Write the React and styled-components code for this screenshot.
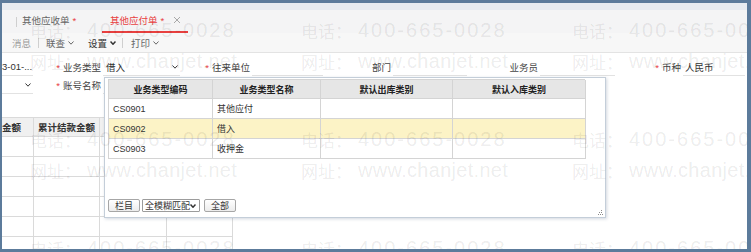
import React from 'react';
import styled, { createGlobalStyle } from 'styled-components';

const GlobalStyle = createGlobalStyle`
  html, body {
    margin: 0;
    padding: 0;
    background: #fff;
  }
  body {
    font-family: "Liberation Sans", "Noto Sans CJK SC", sans-serif;
    font-size: 9.5px;
    color: #333;
  }
  * {
    box-sizing: border-box;
  }
`;

const Frame = styled.div`
  width: 751px;
  height: 252px;
  border-style: solid;
  border-color: #5c7b9b;
  border-width: 3px 4px 3px 2px;
  position: relative;
  overflow: hidden;
  background: #fff;
`;

const TopStrip = styled.div`
  height: 7px;
  background: #e7ebf0;
`;

const TabBar = styled.div`
  height: 23px;
  background: #f4f4f5;
  display: flex;
  align-items: stretch;
  padding-left: 14px;
`;

const Sep = styled.span`
  align-self: center;
  width: 1px;
  height: 10px;
  background: #cfcfcf;
  margin-left: ${p => p.$ml || 0}px;
`;

const Tab = styled.div`
  width: ${p => p.$w}px;
  margin-left: ${p => p.$ml || 0}px;
  display: flex;
  align-items: center;
  gap: 3px;
  padding-left: ${p => p.$pl || 0}px;
  padding-bottom: 1px;
  color: ${p => (p.$active ? '#e8403f' : '#666')};
  border-bottom: 2px solid ${p => (p.$active ? '#e8403f' : 'transparent')};
  white-space: nowrap;

  .star {
    color: #e8403f;
  }
`;

const Close = styled.span`
  margin-left: 6px;
  display: inline-flex;
  color: #a8a8a8;
`;

const Toolbar = styled.div`
  height: 20px;
  background: #f7f7f7;
  border-bottom: 1px solid #e3e3e3;
  display: flex;
  align-items: center;
  padding-left: 10px;
`;

const ToolItem = styled.span`
  display: inline-flex;
  align-items: center;
  gap: 3px;
  margin-left: ${p => p.$ml || 0}px;
  color: ${p => (p.$muted ? '#9a9a9a' : p.$strong ? '#333' : '#666')};
  white-space: nowrap;
`;

const Form = styled.div`
  padding-top: 5px;
  display: flex;
  flex-direction: column;
`;

const FormRow = styled.div`
  display: flex;
  height: 18px;
`;

const Label = styled.div`
  width: ${p => p.$w}px;
  display: flex;
  align-items: center;
  justify-content: flex-end;
  padding-right: 2px;
  white-space: nowrap;
  color: #444;

  .star {
    color: #e8403f;
    margin-right: 3px;
  }
`;

const Input = styled.div`
  width: ${p => p.$w}px;
  display: flex;
  align-items: center;
  justify-content: space-between;
  padding: 0 2px 0 ${p => (p.$pl === undefined ? 3 : p.$pl)}px;
  border-bottom: 1px solid #e2e2e2;
  white-space: nowrap;
  overflow: hidden;
  color: #333;
`;

const Grid = styled.div`
  margin-top: 23px;
  display: grid;
  grid-template-columns: 32px 66px 67px 66px;
  grid-auto-rows: 20px;
  width: 231px;
`;

const Cell = styled.div`
  border-right: 1px solid #dadada;
  border-bottom: 1px solid #dadada;
  display: flex;
  align-items: center;
  justify-content: ${p => (p.$left ? 'flex-start' : 'center')};
  white-space: nowrap;
  overflow: hidden;
  background: ${p => (p.$head ? '#f0f0f0' : '#fff')};
  border-top: ${p => (p.$head ? '1px solid #dadada' : 'none')};
  font-weight: ${p => (p.$head ? 700 : 400)};
  color: #333;
`;

const Popup = styled.div`
  position: absolute;
  left: 102px;
  top: 74px;
  width: 502px;
  height: 141px;
  background: #fff;
  border: 1px solid #c4ced9;
  box-shadow: 1px 1px 3px rgba(80, 100, 130, 0.25);
  display: flex;
  flex-direction: column;
  padding: 1px 3px 5px 3px;
  z-index: 5;
`;

const PickTable = styled.div`
  width: 477px;
  display: grid;
  grid-template-columns: 104px 108px 132px 133px;
  grid-template-rows: 19px repeat(3, 20px);
  border-left: 1px solid #d4d4d4;
  border-top: 1px solid #d4d4d4;
  font-size: 9px;
`;

const PickCell = styled.div`
  border-right: 1px solid #d4d4d4;
  border-bottom: 1px solid #d4d4d4;
  display: flex;
  align-items: center;
  justify-content: ${p => (p.$head ? 'center' : 'flex-start')};
  padding-left: ${p => (p.$head ? 0 : 4)}px;
  background: ${p => (p.$head ? '#e6e6e6' : p.$hl ? '#fcf3c6' : '#fff')};
  font-weight: ${p => (p.$head ? 700 : 400)};
  color: ${p => (p.$head ? '#222' : '#333')};
  white-space: nowrap;
`;

const Footer = styled.div`
  margin-top: auto;
  display: flex;
  align-items: center;
`;

const Btn = styled.div`
  width: ${p => p.$w}px;
  height: 13px;
  margin-left: ${p => p.$ml || 0}px;
  border: 1px solid #a6a6a6;
  border-radius: 2px;
  background: linear-gradient(#ffffff, #ececec);
  display: flex;
  align-items: center;
  justify-content: center;
  font-size: 9px;
  color: #333;
`;

const Combo = styled(Btn)`
  background: #fff;
  border-color: #9c9c9c;
  justify-content: space-between;
  padding: 0 3px 0 2px;
  border-radius: 1px;
`;

const Grip = styled.svg`
  position: absolute;
  right: 2px;
  bottom: 2px;
`;

const Watermark = styled.div`
  position: absolute;
  inset: 0;
  pointer-events: none;
  z-index: 10;
  display: grid;
  grid-template-columns: repeat(3, 271px);
  grid-auto-rows: 109px;
  padding: 12px 0 0 28px;
  color: rgba(0, 0, 0, 0.085);
`;

const Tile = styled.div`
  display: flex;
  flex-direction: column;
`;

const WmLine = styled.div`
  height: 31px;
  display: flex;
  align-items: center;
  white-space: nowrap;
`;

const WmLabel = styled.span`
  width: 57px;
  font-family: "Noto Sans CJK SC", sans-serif;
  font-size: 17px;
`;

const WmText = styled.span`
  font-family: "Liberation Sans", sans-serif;
  font-size: 20px;
  letter-spacing: ${p => p.$ls}px;
`;

const Chevron = ({ bold }) => (
  <svg width="6" height="4" viewBox="0 0 6 4">
    <polyline
      points="0.5,0.5 3,3.2 5.5,0.5"
      fill="none"
      stroke="currentColor"
      strokeWidth={bold ? 1.5 : 1}
    />
  </svg>
);

const headCols = ['业务类型编码', '业务类型名称', '默认出库类别', '默认入库类别'];
const types = [
  ['CS0901', '其他应付'],
  ['CS0902', '借入'],
  ['CS0903', '收押金'],
];

export default function App() {
  const gridRows = [0, 1, 2, 3, 4, 5];
  const tiles = Array.from({ length: 9 });

  return (
    <>
      <GlobalStyle />
      <Frame>
        <TopStrip />
        <TabBar>
          <Sep />
          <Tab $w={80} $ml={5}>
            其他应收单 <span className="star">*</span>
          </Tab>
          <Tab $w={86} $pl={8} $active>
            其他应付单 <span>*</span>
            <Close>
              <svg width="8" height="8" viewBox="0 0 8 8">
                <path d="M1 1 L7 7 M7 1 L1 7" stroke="currentColor" strokeWidth="1" />
              </svg>
            </Close>
          </Tab>
        </TabBar>
        <Toolbar>
          <ToolItem $muted>消息</ToolItem>
          <Sep $ml={7} />
          <ToolItem $ml={7}>联查 <Chevron /></ToolItem>
          <ToolItem $ml={14} $strong>设置 <Chevron bold /></ToolItem>
          <Sep $ml={6} />
          <ToolItem $ml={8}>打印 <Chevron /></ToolItem>
        </Toolbar>

        <Form>
          <FormRow>
            <Input $w={31} $pl={0}>3-01-...</Input>
            <Label $w={70}><span className="star">*</span>业务类型</Label>
            <Input $w={77}>借入 <Chevron /></Input>
            <Label $w={72}><span className="star">*</span>往来单位</Label>
            <Input $w={71} />
            <Label $w={70}>部门</Label>
            <Input $w={74} />
            <Label $w={73}>业务员</Label>
            <Input $w={75} />
            <Label $w={68}><span className="star">*</span>币种</Label>
            <Input $w={62} $pl={2}>人民币</Input>
          </FormRow>
          <FormRow>
            <Input $w={31}><span /> <Chevron /></Input>
            <Label $w={70}><span className="star">*</span>账号名称</Label>
            <Input $w={77} />
          </FormRow>
        </Form>

        <Grid>
          <Cell $head $left>金额</Cell>
          <Cell $head>累计结款金额</Cell>
          <Cell $head />
          <Cell $head />
          {gridRows.map(r => (
            <React.Fragment key={r}>
              <Cell />
              <Cell />
              <Cell />
              <Cell />
            </React.Fragment>
          ))}
        </Grid>

        <Popup>
          <PickTable>
            {headCols.map(h => (
              <PickCell key={h} $head>{h}</PickCell>
            ))}
            {types.map(([code, name], i) => (
              <React.Fragment key={code}>
                <PickCell $hl={i === 1}>{code}</PickCell>
                <PickCell $hl={i === 1}>{name}</PickCell>
                <PickCell $hl={i === 1} />
                <PickCell $hl={i === 1} />
              </React.Fragment>
            ))}
          </PickTable>
          <Footer>
            <Btn $w={32}>栏目</Btn>
            <Combo $w={58} $ml={2}>全模糊匹配 <Chevron bold /></Combo>
            <Btn $w={32} $ml={4}>全部</Btn>
          </Footer>
          <Grip width="5" height="5" viewBox="0 0 5 5">
            <rect x="3" y="0" width="1" height="1" fill="#8a8a8a" />
            <rect x="1" y="2" width="1" height="1" fill="#8a8a8a" />
            <rect x="3" y="2" width="1" height="1" fill="#8a8a8a" />
            <rect x="0" y="4" width="1" height="1" fill="#8a8a8a" />
            <rect x="2" y="4" width="1" height="1" fill="#8a8a8a" />
            <rect x="4" y="4" width="1" height="1" fill="#8a8a8a" />
          </Grip>
        </Popup>

        <Watermark>
          {tiles.map((_, i) => (
            <Tile key={i}>
              <WmLine>
                <WmLabel>电话：</WmLabel>
                <WmText $ls={2}>400-665-0028</WmText>
              </WmLine>
              <WmLine>
                <WmLabel>网址：</WmLabel>
                <WmText $ls={0.3}>www.chanjet.net</WmText>
              </WmLine>
            </Tile>
          ))}
        </Watermark>
      </Frame>
    </>
  );
}
